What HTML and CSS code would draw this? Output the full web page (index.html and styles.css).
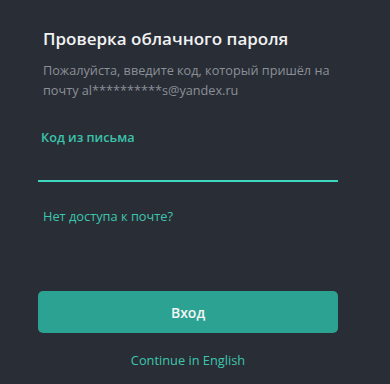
FILE: index.html
```html
<!DOCTYPE html>
<html lang="ru">
<head>
<meta charset="utf-8">
<link rel="stylesheet" href="styles.css">
</head>
<body>
<main class="card">
  <h1 class="title">Проверка облачного пароля</h1>
  <p class="desc">Пожалуйста, введите код, который пришёл на почту al**********s@yandex.ru</p>
  <label class="label" for="code">Код из письма</label>
  <input class="input" id="code" type="text">
  <a class="link" href="#">Нет доступа к почте?</a>
  <button class="btn" type="button">Вход</button>
  <a class="lang" href="#">Continue in English</a>
</main>
</body>
</html>
```
FILE: styles.css
```css
html, body {
  margin: 0;
  padding: 0;
  background: #292d36;
  height: 100%;
}
body {
  font-family: "Open Sans", "Noto Sans", sans-serif;
}
.card {
  width: 300px;
  margin-left: 38px;
  padding-top: 27px;
  display: flex;
  flex-direction: column;
}
.title {
  margin: 0;
  padding-left: 5px;
  font-size: 17px;
  line-height: 23px;
  font-weight: 600;
  color: #f1f2f3;
}
.desc {
  margin: 10px 0 0;
  padding-left: 5px;
  font-size: 12.7px;
  line-height: 20px;
  color: #8b9097;
}
.label {
  margin-top: 27px;
  padding-left: 3px;
  font-size: 12.7px;
  line-height: 20px;
  font-weight: 600;
  color: #3cc3ab;
}
.input {
  height: 33px;
  box-sizing: content-box;
  border: 0;
  border-bottom: 2px solid #3ed6c0;
  background: transparent;
  padding: 0;
  outline: none;
  color: #f1f2f3;
  font: inherit;
}
.link {
  margin-top: 24px;
  padding-left: 5px;
  font-size: 12.8px;
  line-height: 20px;
  color: #3ec6ad;
  text-decoration: none;
}
.btn {
  margin-top: 65px;
  height: 42px;
  border: 0;
  border-radius: 5px;
  background: #2ca392;
  color: #f4f6f6;
  font-family: inherit;
  font-size: 14px;
  font-weight: 600;
}
.lang {
  margin-top: 17px;
  text-align: center;
  font-size: 12.8px;
  line-height: 20px;
  color: #3ec6ad;
  text-decoration: none;
}
```
